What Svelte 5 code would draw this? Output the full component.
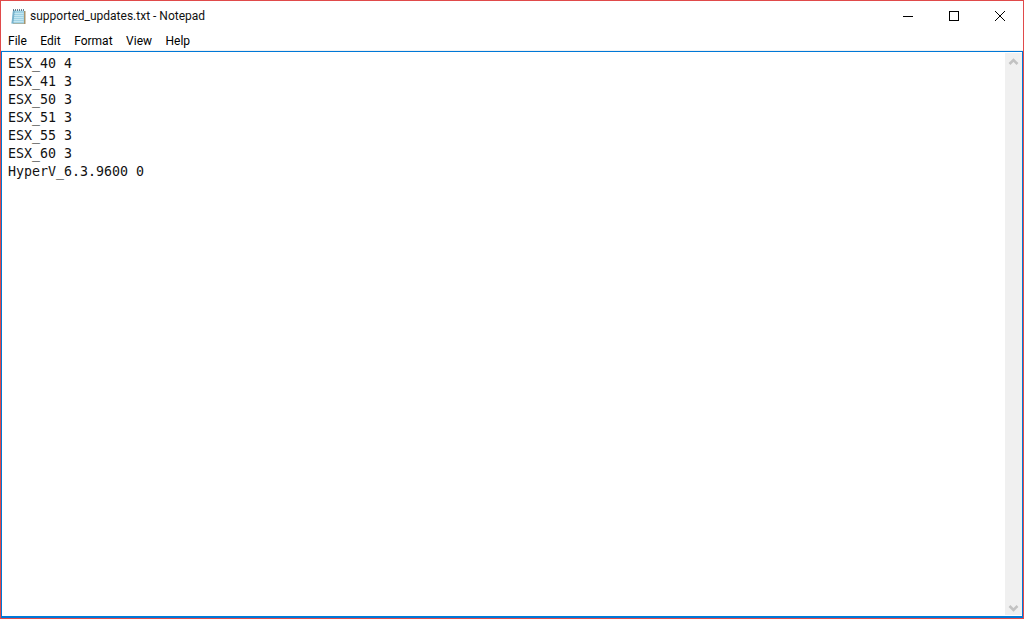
<script>
  const menus = ['File', 'Edit', 'Format', 'View', 'Help'];
  const lines = ['ESX_40 4', 'ESX_41 3', 'ESX_50 3', 'ESX_51 3', 'ESX_55 3', 'ESX_60 3', 'HyperV_6.3.9600 0'];
</script>

<div class="window">
  <header class="titlebar">
    <svg class="app-icon" width="16" height="16" viewBox="0 0 16 16">
      <path d="M4 3h11.500v13.500H3z" fill="#a8946c" />
      <path d="M3 2.500h11v13H1.500z" fill="#9fd2e4" />
      <path d="M3 2.500h2l-1.500 13h-2z" fill="#79b2cc" />
      <path d="M4.500 5.500h9M4.300 7.500h9.200M4 9.500h9.500M3.800 11.500h9.700M3.600 13.500h9.900" stroke="#c4e6f1" stroke-width="1" />
      <path d="M3 2h11" stroke="#3c5a6e" stroke-width="1.600" stroke-dasharray="1 1" />
    </svg>
    <span class="title">supported_updates.txt - Notepad</span>
    <div class="controls">
      <div class="ctl">
        <svg width="12" height="12" viewBox="0 0 12 12"><path d="M1 6.500h10" stroke="#000" stroke-width="1" /></svg>
      </div>
      <div class="ctl">
        <svg width="12" height="12" viewBox="0 0 12 12"><rect x="1.500" y="1.500" width="9" height="9" fill="none" stroke="#000" stroke-width="1" /></svg>
      </div>
      <div class="ctl">
        <svg width="12" height="12" viewBox="0 0 12 12"><path d="M1 1l10 10M11 1L1 11" stroke="#000" stroke-width="1" /></svg>
      </div>
    </div>
  </header>

  <nav class="menubar">
    {#each menus as m}
      <span class="menu">{m}</span>
    {/each}
  </nav>

  <main class="editor">
    <pre class="text">{lines.join('\n')}</pre>
    <div class="scrollbar">
      <svg width="17" height="17" viewBox="0 0 17 17"><path d="M4.500 11l4-4 4 4" fill="none" stroke="#c2c2c2" stroke-width="2.600" /></svg>
      <svg width="17" height="17" viewBox="0 0 17 17"><path d="M4.500 8l4 4 4-4" fill="none" stroke="#c2c2c2" stroke-width="2.600" /></svg>
    </div>
  </main>
</div>

<style>
  :global(body) {
    margin: 0;
    background: #fff;
  }

  .window {
    width: 1024px;
    height: 619px;
    box-sizing: border-box;
    border: 1px solid #e04a4a;
    display: flex;
    flex-direction: column;
    font-family: Roboto, "Noto Sans", sans-serif;
    color: #000;
  }

  .titlebar {
    height: 30px;
    flex: none;
    display: flex;
    align-items: center;
    padding-left: 9px;
  }

  .app-icon {
    flex: none;
  }

  .title {
    margin-left: 4px;
    font-size: 12px;
    color: #111;
  }

  .controls {
    margin-left: auto;
    display: flex;
  }

  .ctl {
    width: 46px;
    height: 29px;
    display: flex;
    align-items: center;
    justify-content: center;
  }

  .menubar {
    height: 19px;
    flex: none;
    display: flex;
    align-items: center;
    padding-left: 7px;
    gap: 13.500px;
    font-size: 12px;
    border-bottom: 1px solid #f0f0f0;
  }

  .editor {
    flex: 1;
    min-height: 0;
    border: 1px solid #0078d7;
    border-bottom-width: 2px;
    display: flex;
    background: #fff;
  }

  .text {
    flex: 1;
    margin: 0;
    padding: 3px 0 0 6px;
    font-family: "DejaVu Sans Mono", monospace;
    font-size: 13.300px;
    line-height: 18px;
    color: #111;
  }

  .scrollbar {
    width: 17px;
    flex: none;
    margin: 1px 0 1px;
    background: #f0f0f0;
    display: flex;
    flex-direction: column;
    justify-content: space-between;
  }
</style>
